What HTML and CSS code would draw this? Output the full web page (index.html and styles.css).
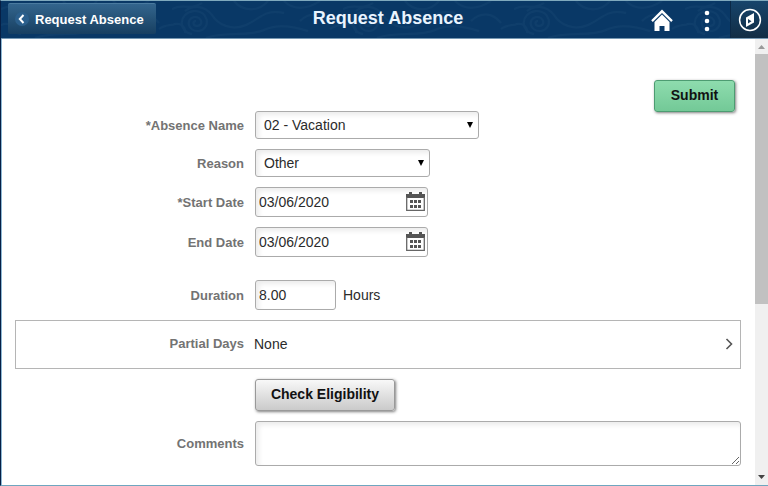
FILE: index.html
```html
<!DOCTYPE html>
<html lang="en">
<head>
    <meta charset="UTF-8">
    <meta name="viewport" content="width=device-width, initial-scale=1.0">
    <title>Request Absence</title>
    <link rel="stylesheet" href="styles.css">
</head>
<body>

<header>
    <!-- Banner pattern -->
    <svg class="pattern" aria-hidden="true">
        <defs>
            <pattern id="swirls" width="171" height="37" patternUnits="userSpaceOnUse">
                <path d="M0 8 C12 2 18 10 30 2 M158 28 C166 22 172 26 180 20 M0 24 C8 20 14 26 13 32 M13 10 C20 4 32 4 40 14 C46 24 60 30 74 24 S92 8 112 12 M34 37 C52 30 78 36 92 29 S124 26 136 30 M20 33 C6 31 6 12 22 10 C36 9 40 27 27 30 C16 31 13 18 22 16 C30 15 32 25 25 25 C21 25 20 20 24 20 M62 0 C72 12 88 10 96 0 M112 0 C122 10 136 8 148 0 M128 20 C138 10 150 12 158 22"/>
            </pattern>
        </defs>
        <rect width="100%" height="100%" fill="url(#swirls)"/>
    </svg>
    <button type="button" class="back">
        <svg width="14" height="14" viewBox="0 0 14 14" aria-hidden="true">
            <circle cx="7" cy="7" r="7" fill="#2b5f8c"/>
            <path d="M8.500 3 L4.800 7 L8.500 11" fill="none" stroke="#fff" stroke-width="2"/>
        </svg>
        Request Absence
    </button>
    <h1>Request Absence</h1>
    <div class="tools">
        <button type="button" class="home" aria-label="Home">
            <svg width="22" height="23" viewBox="0 0 22 23">
                <path d="M11 .5 L21.800 11.300 L20.200 13 L11 3.900 L1.800 13 L.2 11.300 Z" fill="#fff"/>
                <path d="M3.500 13 L11 5.600 L18.500 13 V22 H13.500 V17 H8.500 V22 H3.500 Z" fill="#fff"/>
            </svg>
        </button>
        <button type="button" class="more" aria-label="Actions">
            <svg width="6" height="22" viewBox="0 0 6 22" fill="#fff">
                <circle cx="3" cy="3" r="2.300"/>
                <circle cx="3" cy="11" r="2.300"/>
                <circle cx="3" cy="19" r="2.300"/>
            </svg>
        </button>
        <button type="button" class="navbar" aria-label="NavBar">
            <svg width="24" height="24" viewBox="0 0 24 24">
                <circle cx="12" cy="12" r="10.400" fill="none" stroke="#fff" stroke-width="1.500"/>
                <path d="M16 5 V14.500 L8 19 V9.500 Z" fill="#fff"/>
                <path d="M10 11 L13.500 13.200 L10 15.500 Z" fill="#173a58"/>
            </svg>
        </button>
    </div>
</header>

<div class="page">
    <main>
        <form>
            <div class="actions">
                <button type="button" class="btn submit">Submit</button>
            </div>

            <div class="row">
                <label for="absenceName">*Absence Name</label>
                <div class="select name">
                    <select id="absenceName">
                        <option>02 - Vacation</option>
                    </select>
                    <svg width="6" height="6" viewBox="0 0 6 6" aria-hidden="true"><path d="M0 0 H6 L3 6 Z"/></svg>
                </div>
            </div>
            <div class="row">
                <label for="reason">Reason</label>
                <div class="select reason">
                    <select id="reason">
                        <option>Other</option>
                    </select>
                    <svg width="6" height="6" viewBox="0 0 6 6" aria-hidden="true"><path d="M0 0 H6 L3 6 Z"/></svg>
                </div>
            </div>
            <div class="row">
                <label for="startDate">*Start Date</label>
                <div class="date">
                    <input type="text" id="startDate" value="03/06/2020">
                    <button type="button" class="calendar" aria-label="Choose start date">
                        <svg width="19" height="20" viewBox="0 0 19 20">
                            <path d="M0 2 H3 V0 H6 V2 H13 V0 H16 V2 H19 V6 H0 Z M4 8 H7 V11 H4 Z M8 8 H11 V11 H8 Z M12 8 H15 V11 H12 Z M4 13 H7 V16 H4 Z M8 13 H11 V16 H8 Z M12 13 H15 V16 H12 Z" fill="#555"/>
                            <path d="M.7 5 V18.300 H18.300 V5" fill="none" stroke="#666" stroke-width="1.300"/>
                        </svg>
                    </button>
                </div>
            </div>
            <div class="row">
                <label for="endDate">End Date</label>
                <div class="date">
                    <input type="text" id="endDate" value="03/06/2020">
                    <button type="button" class="calendar" aria-label="Choose end date">
                        <svg width="19" height="20" viewBox="0 0 19 20">
                            <path d="M0 2 H3 V0 H6 V2 H13 V0 H16 V2 H19 V6 H0 Z M4 8 H7 V11 H4 Z M8 8 H11 V11 H8 Z M12 8 H15 V11 H12 Z M4 13 H7 V16 H4 Z M8 13 H11 V16 H8 Z M12 13 H15 V16 H12 Z" fill="#555"/>
                            <path d="M.7 5 V18.300 H18.300 V5" fill="none" stroke="#666" stroke-width="1.300"/>
                        </svg>
                    </button>
                </div>
            </div>
            <div class="row duration">
                <label for="duration">Duration</label>
                <div class="amount">
                    <input type="text" id="duration" value="8.00">
                    <span>Hours</span>
                </div>
            </div>

            
            <a href="#" class="row partial">
                <span class="label">Partial Days</span>
                <span class="value">None</span>
                <svg width="8" height="12" viewBox="0 0 8 12" aria-hidden="true">
                    <path d="M1.500 1 L6.500 6 L1.500 11" fill="none" stroke="#555" stroke-width="1.600"/>
                </svg>
            </a>

            <div class="row">
                <button type="button" class="btn check">Check Eligibility</button>
            </div>
            <div class="row">
                <label for="comments">Comments</label>
                <textarea id="comments"></textarea>
            </div>
        </form>
    </main>

    <!-- Scroll bar -->
    <div class="scrollbar" aria-hidden="true">
        <svg width="7" height="4" viewBox="0 0 7 4"><path d="M0 4 L3.500 0 L7 4 Z" fill="#999"/></svg>
        <div class="track"><div class="thumb"></div></div>
        <svg width="7" height="4" viewBox="0 0 7 4"><path d="M0 0 L3.500 4 L7 0 Z" fill="#444"/></svg>
    </div>
</div>

</body>
</html>
```
FILE: styles.css
```css
* {
    box-sizing: border-box;
}
body {
    font-family: "Liberation Sans", Arial, sans-serif;
    font-size: 14px;
    color: #2b2b2b;
    background-color: #fff;
    margin: 0;
    height: 100vh;
    display: flex;
    flex-direction: column;
    overflow: hidden;
    border-top: 1px solid #7fa9bd;
    border-bottom: 1px solid #6fa6bf;
    border-left: 1px solid #061f45;
}
button,
input,
select,
textarea {
    font: inherit;
    color: inherit;
    margin: 0;
}
header {
    position: relative;
    flex: none;
    height: 38px;
    display: grid;
    grid-template-columns: 1fr auto 1fr;
    align-items: center;
    padding-left: 7px;
    background-color: #093866;
    border-bottom: 1px solid #7698b3;
    color: #fff;
}
.pattern {
    position: absolute;
    top: 0;
    left: 0;
    width: 100%;
    height: 100%;
}
.pattern path {
    fill: none;
    stroke: #1b4a76;
    stroke-width: 2;
    opacity: 0.35;
}
header h1 {
    position: relative;
    margin: 0;
    font-size: 18px;
    line-height: 34px;
    align-self: start;
    color: #e9f4ff;
}
header button {
    display: flex;
    align-items: center;
    justify-content: center;
    border: none;
    padding: 0;
    background: none;
    color: #fff;
}
header .back {
    position: relative;
    justify-self: start;
    align-self: start;
    margin-top: 2px;
    height: 31px;
    padding: 0 12px 0 7px;
    gap: 6px;
    font-size: 13px;
    font-weight: bold;
    white-space: nowrap;
    background: linear-gradient(#33658d, #173f61);
    border-top: 1px solid #4a7a9f;
    border-radius: 2px;
}
.tools {
    position: relative;
    justify-self: end;
    align-self: stretch;
    display: flex;
}
.tools .home {
    width: 24px;
    margin-right: 24px;
    padding-top: 2px;
}
.tools .more {
    width: 18px;
    margin-right: 14px;
    padding-top: 2px;
}
.tools .navbar {
    width: 38px;
    background: linear-gradient(#17446b, #122d45);
    border-left: 1px solid #0b2947;
}
.page {
    flex: 1;
    min-height: 0;
    display: flex;
}
main {
    flex: 1;
    min-width: 0;
    overflow: hidden;
    border-left: 1px solid #8db8d4;
    padding: 41px 14px 0 13px;
}
form {
    display: flex;
    flex-direction: column;
    gap: 10px;
}
.actions {
    display: flex;
    justify-content: flex-end;
    padding-right: 6px;
    margin-bottom: -11px;
}
.btn {
    height: 32px;
    padding: 0 0 2px;
    font-weight: bold;
    color: #111;
    border: 1px solid #999;
    border-radius: 3px;
    box-shadow: 1px 1px 3px rgba(0, 0, 0, 0.5);
}
.submit {
    width: 81px;
    background: linear-gradient(#8edcae, #73c997);
    border-color: #4d9c72;
}
.check {
    grid-column: 2;
    justify-self: start;
    width: 140px;
    background: linear-gradient(#f8f8f8, #cacaca);
}
.row {
    display: grid;
    grid-template-columns: 229px 1fr;
    column-gap: 11px;
    align-items: center;
}
label,
.label {
    text-align: right;
    font-size: 13px;
    font-weight: bold;
    color: #737373;
}
select,
input,
textarea {
    display: block;
    width: 100%;
    border: 1px solid #ababab;
    border-radius: 3px;
    background-color: #fff;
    box-shadow: inset 3px 3px 5px rgba(0, 0, 0, 0.08);
}
input {
    height: 30px;
    padding: 0 3px;
}
.select {
    position: relative;
}
.select select {
    appearance: none;
    height: 28px;
    padding: 0 20px 0 8px;
}
.select svg {
    position: absolute;
    right: 6px;
    top: 50%;
    margin-top: -3px;
    pointer-events: none;
}
.name {
    width: 224px;
}
.reason {
    width: 175px;
}
.date {
    position: relative;
    width: 173px;
}
.calendar {
    position: absolute;
    right: 3px;
    top: 5px;
    padding: 0;
    border: none;
    background: none;
}
.calendar svg {
    display: block;
}
.duration {
    margin-top: 13px;
}
.amount {
    display: flex;
    align-items: center;
    gap: 7px;
}
.amount input {
    width: 81px;
}
.partial {
    height: 49px;
    grid-template-columns: 228px 1fr 8px;
    column-gap: 10px;
    padding: 0 7px 2px 0;
    border: 1px solid #b5b5b5;
    color: inherit;
    text-decoration: none;
}
textarea {
    height: 45px;
    resize: vertical;
}
.scrollbar {
    flex: none;
    width: 13px;
    display: flex;
    flex-direction: column;
    align-items: center;
    justify-content: space-between;
    padding: 6px 0;
    background-color: #f0f0f0;
}
.track {
    align-self: stretch;
    flex: 1;
    margin: 5px 0;
}
.thumb {
    height: 60%;
    background-color: #c1c1c1;
}
```
